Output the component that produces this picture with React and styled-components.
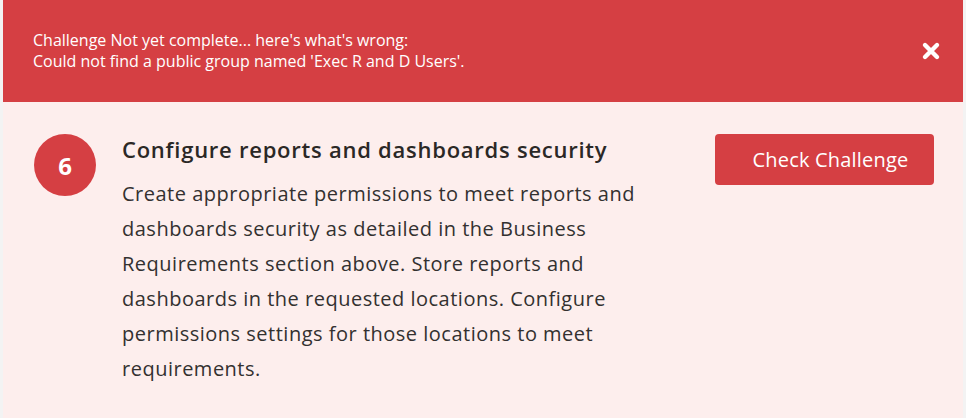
import React from 'react';
import styled, { createGlobalStyle } from 'styled-components';

const GlobalStyle = createGlobalStyle`
  html, body {
    margin: 0;
    padding: 0;
    background: #f3f3f3;
  }
`;

const Frame = styled.div`
  width: 960px;
  height: 418px;
  margin: 0 3px;
  background: #fdeeed;
  overflow: hidden;
`;

const Banner = styled.div`
  height: 102px;
  background: #d53f43;
  display: flex;
  align-items: center;
  justify-content: space-between;
  padding: 0 20px 0 30px;
  box-sizing: border-box;
`;

const BannerText = styled.div`
  font-family: 'Open Sans', 'Liberation Sans', sans-serif;
  font-size: 16px;
  line-height: 21px;
  color: #ffffff;
  p {
    margin: 0;
  }
`;

const Close = styled.button`
  border: none;
  background: transparent;
  padding: 0;
  width: 24px;
  height: 24px;
  display: flex;
  align-items: center;
  justify-content: center;
  cursor: pointer;
`;

const Step = styled.div`
  display: flex;
  align-items: flex-start;
  padding: 32px 29px 0 31px;
`;

const Badge = styled.div`
  flex: 0 0 62px;
  height: 62px;
  border-radius: 50%;
  background: #d53f43;
  color: #ffffff;
  display: flex;
  align-items: center;
  justify-content: center;
  font-family: 'Open Sans', 'Liberation Sans', sans-serif;
  font-weight: 700;
  font-size: 24px;
`;

const Body = styled.div`
  flex: 1;
  margin-left: 26px;
  max-width: 525px;
`;

const Title = styled.h2`
  margin: 0;
  font-family: 'Open Sans', 'Liberation Sans', sans-serif;
  font-weight: 600;
  font-size: 22px;
  letter-spacing: 0.75px;
  line-height: 30px;
  color: #2b2826;
`;

const Description = styled.p`
  margin: 12px 0 0;
  font-family: 'Open Sans', 'Liberation Sans', sans-serif;
  font-size: 20px;
  letter-spacing: 0.5px;
  line-height: 35px;
  color: #333130;
`;

const CheckButton = styled.button`
  margin-left: auto;
  width: 219px;
  height: 51px;
  padding: 0 0 0 12px;
  border: none;
  border-radius: 4px;
  background: #d53f43;
  color: #ffffff;
  font-family: 'Open Sans', 'Liberation Sans', sans-serif;
  font-size: 20px;
  letter-spacing: 0.2px;
  cursor: pointer;
`;

const App = () => (
  <>
    <GlobalStyle />
    <Frame>
      <Banner>
        <BannerText>
          <p>Challenge Not yet complete... here's what's wrong:</p>
          <p>Could not find a public group named 'Exec R and D Users'.</p>
        </BannerText>
        <Close aria-label="Close">
          <svg width="20" height="20" viewBox="0 0 20 20">
            <path d="M4 4 L16 16 M16 4 L4 16" stroke="#ffffff" strokeWidth="4.4" strokeLinecap="round" />
          </svg>
        </Close>
      </Banner>
      <Step>
        <Badge>6</Badge>
        <Body>
          <Title>Configure reports and dashboards security</Title>
          <Description>
            Create appropriate permissions to meet reports and dashboards security as detailed in the
            Business Requirements section above. Store reports and dashboards in the requested
            locations. Configure permissions settings for those locations to meet requirements.
          </Description>
        </Body>
        <CheckButton>Check Challenge</CheckButton>
      </Step>
    </Frame>
  </>
);

export default App;
